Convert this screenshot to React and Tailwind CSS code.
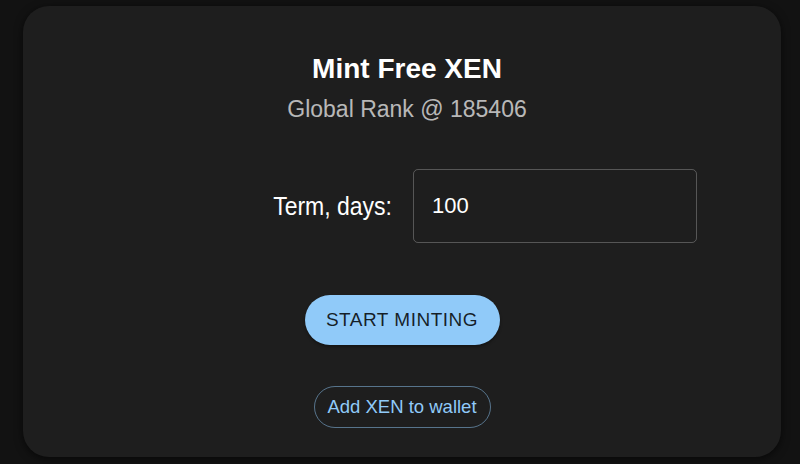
import React, { useState } from 'react';

export default function App() {
  const [term, setTerm] = useState('100');

  return (
    <div
      className="w-[800px] h-[464px] overflow-hidden bg-[#121212] pt-[6px] pl-[23px]"
      style={{ fontFamily: '"Liberation Sans", Arial, sans-serif' }}
    >
      <div className="w-[758px] h-[451px] bg-[#1e1e1e] rounded-[26px] shadow-[0_2px_8px_rgba(0,0,0,0.6)] flex flex-col">
        {/* Cabecera */}
        <div className="pt-[47px] pl-[10px] flex flex-col items-center">
          <h2 className="text-[28px] leading-[32px] font-bold text-white">Mint Free XEN</h2>
          <p className="mt-[10px] text-[23px] leading-[28px] text-white/70 scale-y-105">Global Rank @ 185406</p>
        </div>

        {/* Plazo */}
        <div className="mt-[46px] flex items-center">
          <label htmlFor="term" className="w-[390px] pr-[21px] text-right text-[23px] text-white scale-y-110">
            Term, days:
          </label>
          <input
            id="term"
            type="text"
            value={term}
            onChange={(e) => setTerm(e.target.value)}
            className="w-[284px] h-[74px] rounded-[5px] border border-white/25 bg-transparent px-[18px] text-[22px] text-white focus:outline-none"
          />
        </div>

        {/* Botones */}
        <div className="mt-[52px] flex flex-col items-center">
          <button className="w-[195px] h-[50px] rounded-full bg-[#90caf9] text-[19px] tracking-[0.5px] text-black/85 shadow-[0_2px_3px_rgba(0,0,0,0.35)]">
            START MINTING
          </button>
          <button className="mt-[41px] w-[177px] h-[42px] rounded-full border border-[#90caf9]/50 text-[18.5px] text-[#90caf9]">
            Add XEN to wallet
          </button>
        </div>
      </div>
    </div>
  );
}
